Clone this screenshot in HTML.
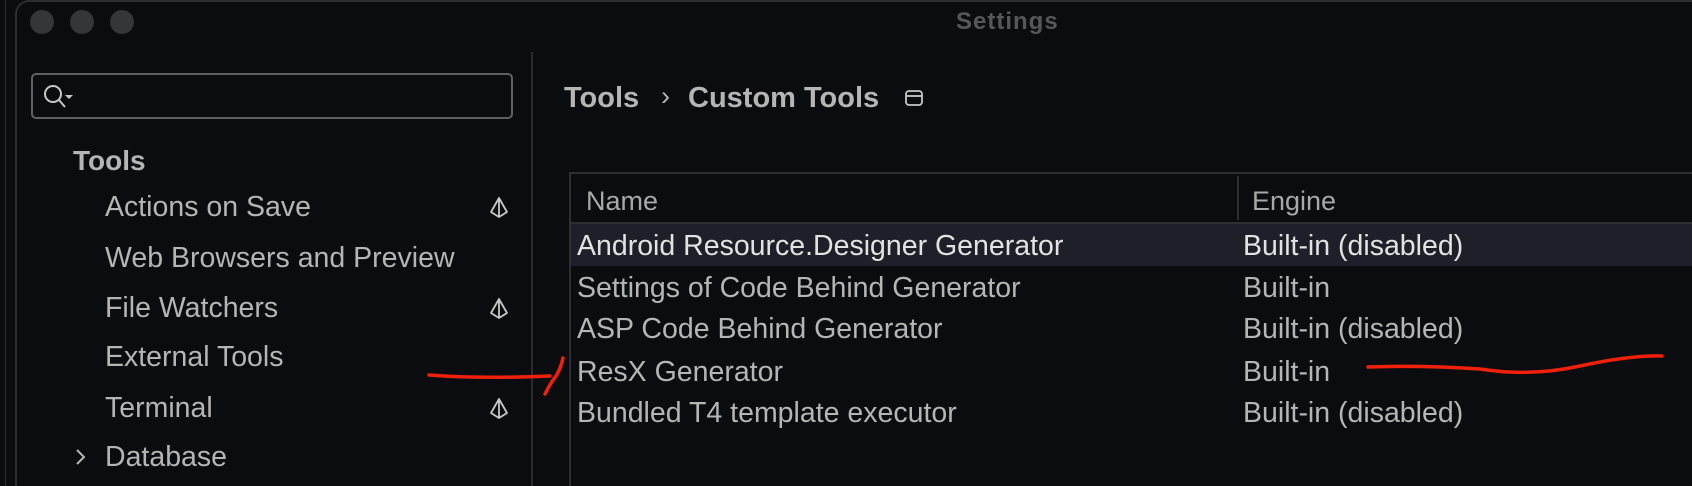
<!DOCTYPE html>
<html><head><meta charset="utf-8"><style>
html,body{margin:0;padding:0;width:1692px;height:486px;overflow:hidden;background:#0b0c0f;font-family:"Liberation Sans",sans-serif;}
#root{position:relative;width:1692px;height:486px;overflow:hidden}
.abs{position:absolute;white-space:nowrap}
.dot{position:absolute;width:24px;height:24px;border-radius:50%;background:#35363a;top:10px}
.it{position:absolute;left:105px;font-size:28.5px;color:#b5b5b5;line-height:30px}
.dia{position:absolute;left:489px}
.r{position:absolute;left:577px;font-size:28.5px;color:#b5b5b5;line-height:30px}
.e{position:absolute;left:1243px;font-size:28.5px;color:#b5b5b5;line-height:30px}
</style></head><body><div id="root">
<div class="abs" style="left:5px;top:0;width:1px;height:486px;background:#2a2b2f"></div>
<div class="abs" style="left:15px;top:0;width:1677px;height:486px;border-left:2px solid #2c2d31;border-top:2px solid #2c2d31;border-top-left-radius:14px;box-sizing:border-box"></div>
<div class="dot" style="left:30px"></div><div class="dot" style="left:70px"></div><div class="dot" style="left:110px"></div>
<div class="abs" style="left:956px;top:8px;font-size:24px;font-weight:bold;color:#56575b;letter-spacing:1px">Settings</div>
<div class="abs" style="left:31px;top:73px;width:482px;height:46px;border:2px solid #5f6064;border-radius:5px;box-sizing:border-box"></div>
<svg class="abs" style="left:42px;top:83px" width="36" height="30"><circle cx="11" cy="11" r="8" fill="none" stroke="#c8c8c8" stroke-width="2"/><line x1="17" y1="17" x2="23" y2="24" stroke="#c8c8c8" stroke-width="2"/><path d="M23 12h8l-4 4z" fill="#c8c8c8"/></svg>
<div class="abs" style="left:531px;top:52px;width:2px;height:434px;background:#2a2b2f"></div>
<div class="abs" style="left:73px;top:145px;font-size:28px;font-weight:bold;color:#b5b5b5">Tools</div>
<div class="it" style="top:192px">Actions on Save</div>
<div class="it" style="top:243px">Web Browsers and Preview</div>
<div class="it" style="top:293px">File Watchers</div>
<div class="it" style="top:342px">External Tools</div>
<div class="it" style="top:393px">Terminal</div>
<div class="it" style="top:442px">Database</div>
<svg class="abs" style="left:74px;top:447px" width="14" height="20"><path d="M3 3l7 7-7 7" fill="none" stroke="#b5b5b5" stroke-width="2"/></svg>
<svg class="dia" style="top:196px" width="20" height="24"><path d="M10 2L18 16L10 21L2 16Z M10 2V21" fill="none" stroke="#c8c8c8" stroke-width="1.8" stroke-linejoin="round"/></svg>
<svg class="dia" style="top:297px" width="20" height="24"><path d="M10 2L18 16L10 21L2 16Z M10 2V21" fill="none" stroke="#c8c8c8" stroke-width="1.8" stroke-linejoin="round"/></svg>
<svg class="dia" style="top:397px" width="20" height="24"><path d="M10 2L18 16L10 21L2 16Z M10 2V21" fill="none" stroke="#c8c8c8" stroke-width="1.8" stroke-linejoin="round"/></svg>
<div class="abs" style="left:564px;top:82px;font-size:29px;font-weight:bold;color:#b5b5b5">Tools</div>
<div class="abs" style="left:661px;top:81px;font-size:27px;color:#b5b5b5">›</div>
<div class="abs" style="left:688px;top:82px;font-size:29px;font-weight:bold;color:#b5b5b5">Custom Tools</div>
<svg class="abs" style="left:904px;top:89px" width="22" height="20"><rect x="2" y="2" width="16" height="14" rx="3" fill="none" stroke="#c8c8c8" stroke-width="1.8"/><line x1="2" y1="7" x2="18" y2="7" stroke="#c8c8c8" stroke-width="1.8"/></svg>
<div class="abs" style="left:569px;top:172px;width:1123px;height:314px;border-left:2px solid #2e2f33;border-top:2px solid #2e2f33;box-sizing:border-box"></div>
<div class="abs" style="left:571px;top:222px;width:1121px;height:2px;background:#2e2f33"></div>
<div class="abs" style="left:1237px;top:176px;width:2px;height:44px;background:#2e2f33"></div>
<div class="abs" style="left:586px;top:186px;font-size:27px;color:#a8a8a8">Name</div>
<div class="abs" style="left:1252px;top:186px;font-size:27px;color:#a8a8a8">Engine</div>
<div class="abs" style="left:571px;top:224px;width:1121px;height:42px;background:#1e1f28"></div>
<div class="r" style="top:231px;color:#e2e2e2">Android Resource.Designer Generator</div><div class="e" style="top:231px;color:#e2e2e2">Built-in (disabled)</div>
<div class="r" style="top:273px">Settings of Code Behind Generator</div><div class="e" style="top:273px">Built-in</div>
<div class="r" style="top:314px">ASP Code Behind Generator</div><div class="e" style="top:314px">Built-in (disabled)</div>
<div class="r" style="top:357px">ResX Generator</div><div class="e" style="top:357px">Built-in</div>
<div class="r" style="top:398px">Bundled T4 template executor</div><div class="e" style="top:398px">Built-in (disabled)</div>
<svg class="abs" style="left:0;top:0" width="1692" height="486"><g fill="none" stroke="#f0200a" stroke-width="3.5" stroke-linecap="round"><path d="M429 375Q480 379 550 376"/><path d="M563 358Q560 372 553 380Q548 388 545 394"/><path d="M1368 367Q1420 365 1480 369Q1530 377 1580 366Q1630 355 1662 356"/></g></svg>
</div></body></html>
